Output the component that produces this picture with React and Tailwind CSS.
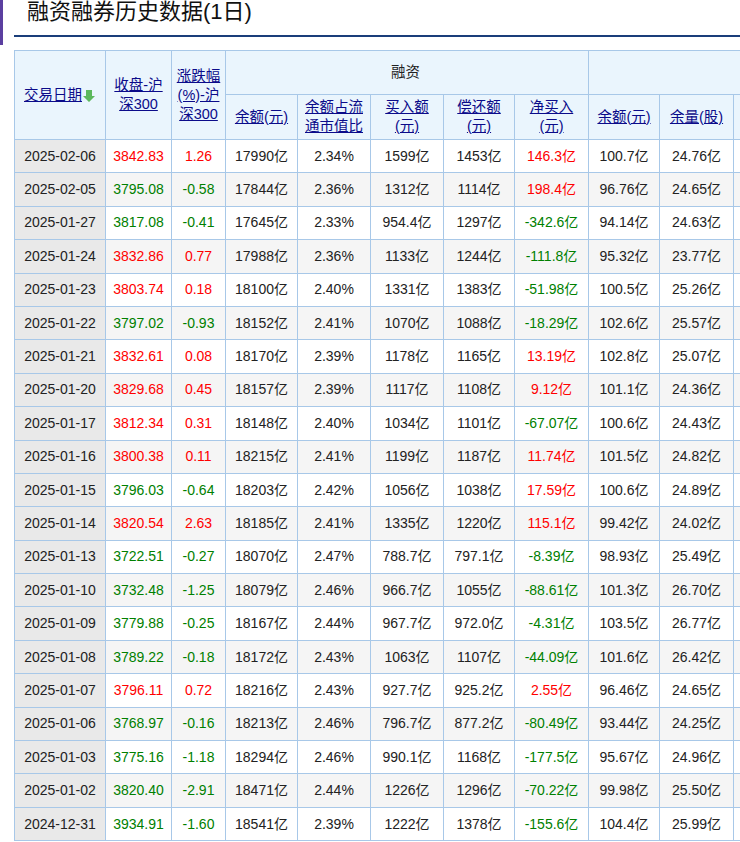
import React from "react";

const rows = [
  ["2025-02-06", "3842.83", "1.26", "17990亿", "2.34%", "1599亿", "1453亿", "146.3亿", "100.7亿", "24.76亿"],
  ["2025-02-05", "3795.08", "-0.58", "17844亿", "2.36%", "1312亿", "1114亿", "198.4亿", "96.76亿", "24.65亿"],
  ["2025-01-27", "3817.08", "-0.41", "17645亿", "2.33%", "954.4亿", "1297亿", "-342.6亿", "94.14亿", "24.63亿"],
  ["2025-01-24", "3832.86", "0.77", "17988亿", "2.36%", "1133亿", "1244亿", "-111.8亿", "95.32亿", "23.77亿"],
  ["2025-01-23", "3803.74", "0.18", "18100亿", "2.40%", "1331亿", "1383亿", "-51.98亿", "100.5亿", "25.26亿"],
  ["2025-01-22", "3797.02", "-0.93", "18152亿", "2.41%", "1070亿", "1088亿", "-18.29亿", "102.6亿", "25.57亿"],
  ["2025-01-21", "3832.61", "0.08", "18170亿", "2.39%", "1178亿", "1165亿", "13.19亿", "102.8亿", "25.07亿"],
  ["2025-01-20", "3829.68", "0.45", "18157亿", "2.39%", "1117亿", "1108亿", "9.12亿", "101.1亿", "24.36亿"],
  ["2025-01-17", "3812.34", "0.31", "18148亿", "2.40%", "1034亿", "1101亿", "-67.07亿", "100.6亿", "24.43亿"],
  ["2025-01-16", "3800.38", "0.11", "18215亿", "2.41%", "1199亿", "1187亿", "11.74亿", "101.5亿", "24.82亿"],
  ["2025-01-15", "3796.03", "-0.64", "18203亿", "2.42%", "1056亿", "1038亿", "17.59亿", "100.6亿", "24.89亿"],
  ["2025-01-14", "3820.54", "2.63", "18185亿", "2.41%", "1335亿", "1220亿", "115.1亿", "99.42亿", "24.02亿"],
  ["2025-01-13", "3722.51", "-0.27", "18070亿", "2.47%", "788.7亿", "797.1亿", "-8.39亿", "98.93亿", "25.49亿"],
  ["2025-01-10", "3732.48", "-1.25", "18079亿", "2.46%", "966.7亿", "1055亿", "-88.61亿", "101.3亿", "26.70亿"],
  ["2025-01-09", "3779.88", "-0.25", "18167亿", "2.44%", "967.7亿", "972.0亿", "-4.31亿", "103.5亿", "26.77亿"],
  ["2025-01-08", "3789.22", "-0.18", "18172亿", "2.43%", "1063亿", "1107亿", "-44.09亿", "101.6亿", "26.42亿"],
  ["2025-01-07", "3796.11", "0.72", "18216亿", "2.43%", "927.7亿", "925.2亿", "2.55亿", "96.46亿", "24.65亿"],
  ["2025-01-06", "3768.97", "-0.16", "18213亿", "2.46%", "796.7亿", "877.2亿", "-80.49亿", "93.44亿", "24.25亿"],
  ["2025-01-03", "3775.16", "-1.18", "18294亿", "2.46%", "990.1亿", "1168亿", "-177.5亿", "95.67亿", "24.96亿"],
  ["2025-01-02", "3820.40", "-2.91", "18471亿", "2.44%", "1226亿", "1296亿", "-70.22亿", "99.98亿", "25.50亿"],
  ["2024-12-31", "3934.91", "-1.60", "18541亿", "2.39%", "1222亿", "1378亿", "-155.6亿", "104.4亿", "25.99亿"],
];

const widths = ["w-[91px]", "w-[66px]", "w-[54px]", "w-[72px]", "w-[73px]", "w-[73px]", "w-[71px]", "w-[74px]", "w-[71px]", "w-[74px]", "w-[40px]"];

const td = "border border-[#a8c8e8] text-center p-0";
const th = td + " font-normal text-[14.5px]";
const link = "text-[#0b0b8a] underline";

export default function App() {
  return (
    <div className="relative w-[740px] h-[842px] overflow-hidden bg-white text-[14px] text-[#222]" style={{ fontFamily: '"Liberation Sans", "Noto Sans CJK SC", sans-serif' }}>
      <div className="absolute left-0 top-0 w-[3px] h-[45px] bg-[#5b3fa0]" />
      <div className="pl-[27px] h-[35px] text-[22px] leading-[24px] text-[#111]">融资融券历史数据(1日)</div>
      <div className="ml-[14px] h-[2px] bg-[#1a3e7a]" />
      <div className="h-[13px]" />
      <table className="ml-[14px] border-collapse table-fixed w-[760px]">
        <colgroup>
          {widths.map((w, i) => <col key={i} className={w} />)}
        </colgroup>
        <thead className="bg-[#eaf5fd] leading-[19px]">
          <tr className="h-[44px]">
            <th rowSpan={2} className={th}>
              <span className={link}>交易日期</span>
              <svg className="inline-block align-middle" width="14" height="14" viewBox="0 0 14 14">
                <path d="M4 1h6v6h3L7 13 1 7h3z" fill="#5cb85c" />
              </svg>
            </th>
            <th rowSpan={2} className={th + " px-1"}><span className={link}>收盘-沪深300</span></th>
            <th rowSpan={2} className={th}><span className={link}>涨跌幅(%)-沪深300</span></th>
            <th colSpan={5} className={th + " text-left pl-[165px]"}>融资</th>
            <th colSpan={3} className={th} />
          </tr>
          <tr className="h-[45px]">
            <th className={th}><span className={link}>余额(元)</span></th>
            <th className={th}><span className={link}>余额占流通市值比</span></th>
            <th className={th + " px-2"}><span className={link}>买入额(元)</span></th>
            <th className={th + " px-2"}><span className={link}>偿还额(元)</span></th>
            <th className={th + " px-2"}><span className={link}>净买入(元)</span></th>
            <th className={th}><span className={link}>余额(元)</span></th>
            <th className={th}><span className={link}>余量(股)</span></th>
            <th className={th} />
          </tr>
        </thead>
        <tbody>
          {rows.map((r, i) => {
            const up = !r[2].startsWith("-");
            const netUp = !r[7].startsWith("-");
            const bg = i % 2 === 1 ? "bg-[#f5f5f5]" : "bg-white";
            return (
              <tr key={r[0]} className={"h-[33.4px] " + bg}>
                <td className={td + " bg-[#e9e9e9]"}>{r[0]}</td>
                <td className={td + (up ? " text-[#ff0000]" : " text-[#008000]")}>{r[1]}</td>
                <td className={td + (up ? " text-[#ff0000]" : " text-[#008000]")}>{r[2]}</td>
                <td className={td}>{r[3]}</td>
                <td className={td}>{r[4]}</td>
                <td className={td}>{r[5]}</td>
                <td className={td}>{r[6]}</td>
                <td className={td + (netUp ? " text-[#ff0000]" : " text-[#008000]")}>{r[7]}</td>
                <td className={td}>{r[8]}</td>
                <td className={td}>{r[9]}</td>
                <td className={td} />
              </tr>
            );
          })}
        </tbody>
      </table>
    </div>
  );
}
